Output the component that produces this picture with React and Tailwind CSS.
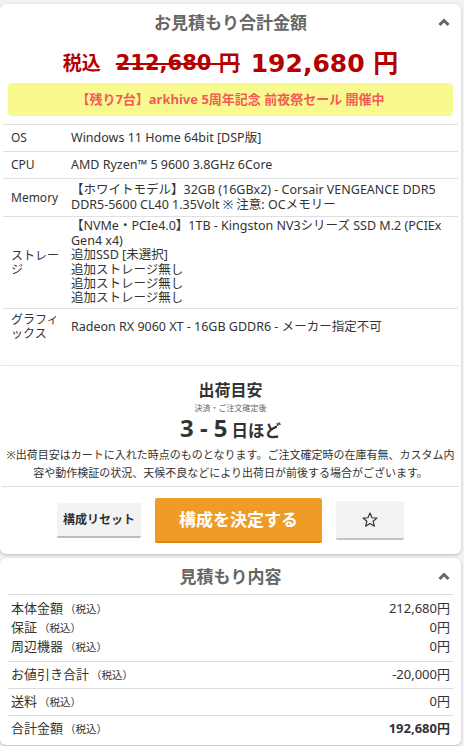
import React from "react";

const FONT = { fontFamily: "'Noto Sans', 'Noto Sans CJK JP', sans-serif" };
const PRICE_FONT = { fontFamily: "'DejaVu Sans', 'Noto Sans CJK JP', sans-serif" };

function Chevron() {
  return (
    <svg width="12" height="9" viewBox="0 0 12 9" className="absolute right-[11px] top-[14px]">
      <path d="M1.5 7 L6 2.5 L10.5 7" fill="none" stroke="#666" strokeWidth="3" strokeLinejoin="miter" />
    </svg>
  );
}

function SpecRow({ label, children, h }) {
  return (
    <div className={`flex items-center border-t border-[#e0e0e0] ${h}`}>
      <div className="w-[68px] pl-[8px] shrink-0 leading-[14px] text-[12px]">{label}</div>
      <div className="flex-1 leading-[14.4px] whitespace-nowrap">{children}</div>
    </div>
  );
}

function Tax() {
  return <span className="text-[10.5px] ml-[2px]">（税込）</span>;
}

export default function App() {
  return (
    <div className="min-h-[746px] bg-[#f3f3f3] pt-[4px] text-[#333]" style={FONT}>
      {/* Card 1 */}
      <div className="w-[461px] bg-white rounded-[6px] shadow-[0_1px_3px_rgba(0,0,0,0.25)] pb-[11px]">
        <div className="relative h-[37px] flex items-center justify-center">
          <div className="text-[17px] font-bold text-[#666] leading-none">お見積もり合計金額</div>
          <Chevron />
        </div>
        <div className="h-[42px] flex items-center justify-center text-[#b40000] font-bold pt-[2px]" style={PRICE_FONT}>
          <span className="text-[19px] leading-none" style={FONT}>税込</span>
          <span className="text-[21px] leading-none line-through decoration-2 ml-[15px]">212,680 円</span>
          <span className="text-[25px] leading-none ml-[11px]">192,680 円</span>
        </div>
        <div className="mx-[8px] h-[33px] rounded-[4px] bg-[#f8fa8f] flex items-center justify-center text-[13px] font-bold text-[#f45a5a]">
          【残り7台】arkhive 5周年記念 前夜祭セール 開催中
        </div>
        <div className="mt-[8px] mx-[3px] text-[12.5px]">
          <SpecRow label="OS" h="h-[27px]">Windows 11 Home 64bit [DSP版]</SpecRow>
          <SpecRow label="CPU" h="h-[27px]">AMD Ryzen™ 5 9600 3.8GHz 6Core</SpecRow>
          <SpecRow label="Memory" h="h-[38px]">
            【ホワイトモデル】32GB (16GBx2) - Corsair VENGEANCE DDR5
            <br />
            DDR5-5600 CL40 1.35Volt ※ 注意: OCメモリー
          </SpecRow>
          <SpecRow label={<>ストレー<br />ジ</>} h="h-[92px]">
            【NVMe・PCIe4.0】1TB - Kingston NV3シリーズ SSD M.2 (PCIEx
            <br />
            Gen4 x4)
            <br />
            追加SSD [未選択]
            <br />
            追加ストレージ無し
            <br />
            追加ストレージ無し
            <br />
            追加ストレージ無し
          </SpecRow>
          <SpecRow label={<>グラフィ<br />ックス</>} h="h-[37px]">
            Radeon RX 9060 XT - 16GB GDDR6 - メーカー指定不可
          </SpecRow>
        </div>
        <div className="mt-[20px] border-t border-[#e6e6e6] mx-[1px] pt-[13px] flex flex-col items-center">
          <div className="text-[16px] font-bold leading-[22px]">出荷目安</div>
          <div className="text-[8px] text-[#666] leading-[12px] mt-[1px]">決済・ご注文確定後</div>
          <div className="flex items-baseline font-bold leading-[28px]">
            <span className="text-[24px]">3 - 5</span>
            <span className="text-[16.5px] ml-[4px]">日ほど</span>
          </div>
          <div className="text-[11px] leading-[18px] text-center px-[2px] mt-[1px]">
            ※出荷目安はカートに入れた時点のものとなります。ご注文確定時の在庫有無、カスタム内
            <br />
            容や動作検証の状況、天候不良などにより出荷日が前後する場合がございます。
          </div>
        </div>
        <div className="border-t border-[#dcdcdc] mx-[2px] mt-[4px] pt-[11px] flex items-center justify-center gap-[14px]">
          <button className="w-[84px] h-[35px] bg-[#f3f3f3] border-b-2 border-[#bdbdbd] rounded-[2px] text-[12px] font-bold text-[#333]">
            構成リセット
          </button>
          <button className="w-[167px] h-[45px] bg-[#ee9c27] border-b-2 border-[#d7861a] rounded-[2px] text-[17px] font-bold text-white">
            構成を決定する
          </button>
          <button className="w-[68px] h-[39px] bg-[#f3f3f3] border-b-2 border-[#c4c4c4] rounded-[2px] flex items-center justify-center">
            <svg width="18" height="18" viewBox="0 0 24 24">
              <path
                d="M12 2.8 L14.7 9 L21.3 9.4 L16.2 13.7 L17.8 20.3 L12 16.7 L6.2 20.3 L7.8 13.7 L2.7 9.4 L9.3 9 Z"
                fill="none"
                stroke="#333"
                strokeWidth="1.6"
                strokeLinejoin="round"
              />
            </svg>
          </button>
        </div>
      </div>

      {/* Card 2 */}
      <div className="mt-[4px] w-[461px] bg-white rounded-[6px] shadow-[0_1px_3px_rgba(0,0,0,0.25)] pb-[3px]">
        <div className="relative h-[36px] flex items-center justify-center">
          <div className="text-[17px] font-bold text-[#666] leading-none">見積もり内容</div>
          <Chevron />
        </div>
        <div className="mx-[8px] text-[13px]">
          <div className="border-t border-[#dcdcdc] pt-[4px] pb-[5px] px-[3px] leading-[18px]">
            <div className="flex justify-between"><span>本体金額<Tax /></span><span>212,680円</span></div>
            <div className="flex justify-between"><span>保証<Tax /></span><span>0円</span></div>
            <div className="flex justify-between"><span>周辺機器<Tax /></span><span>0円</span></div>
          </div>
          <div className="border-t border-[#dcdcdc] h-[27px] px-[3px] flex items-center justify-between">
            <span>お値引き合計<Tax /></span><span>-20,000円</span>
          </div>
          <div className="border-t border-[#dcdcdc] h-[27px] px-[3px] flex items-center justify-between">
            <span>送料<Tax /></span><span>0円</span>
          </div>
          <div className="border-t border-[#dcdcdc] h-[27px] px-[3px] flex items-center justify-between">
            <span>合計金額<Tax /></span><span className="font-bold">192,680円</span>
          </div>
        </div>
      </div>
    </div>
  );
}
